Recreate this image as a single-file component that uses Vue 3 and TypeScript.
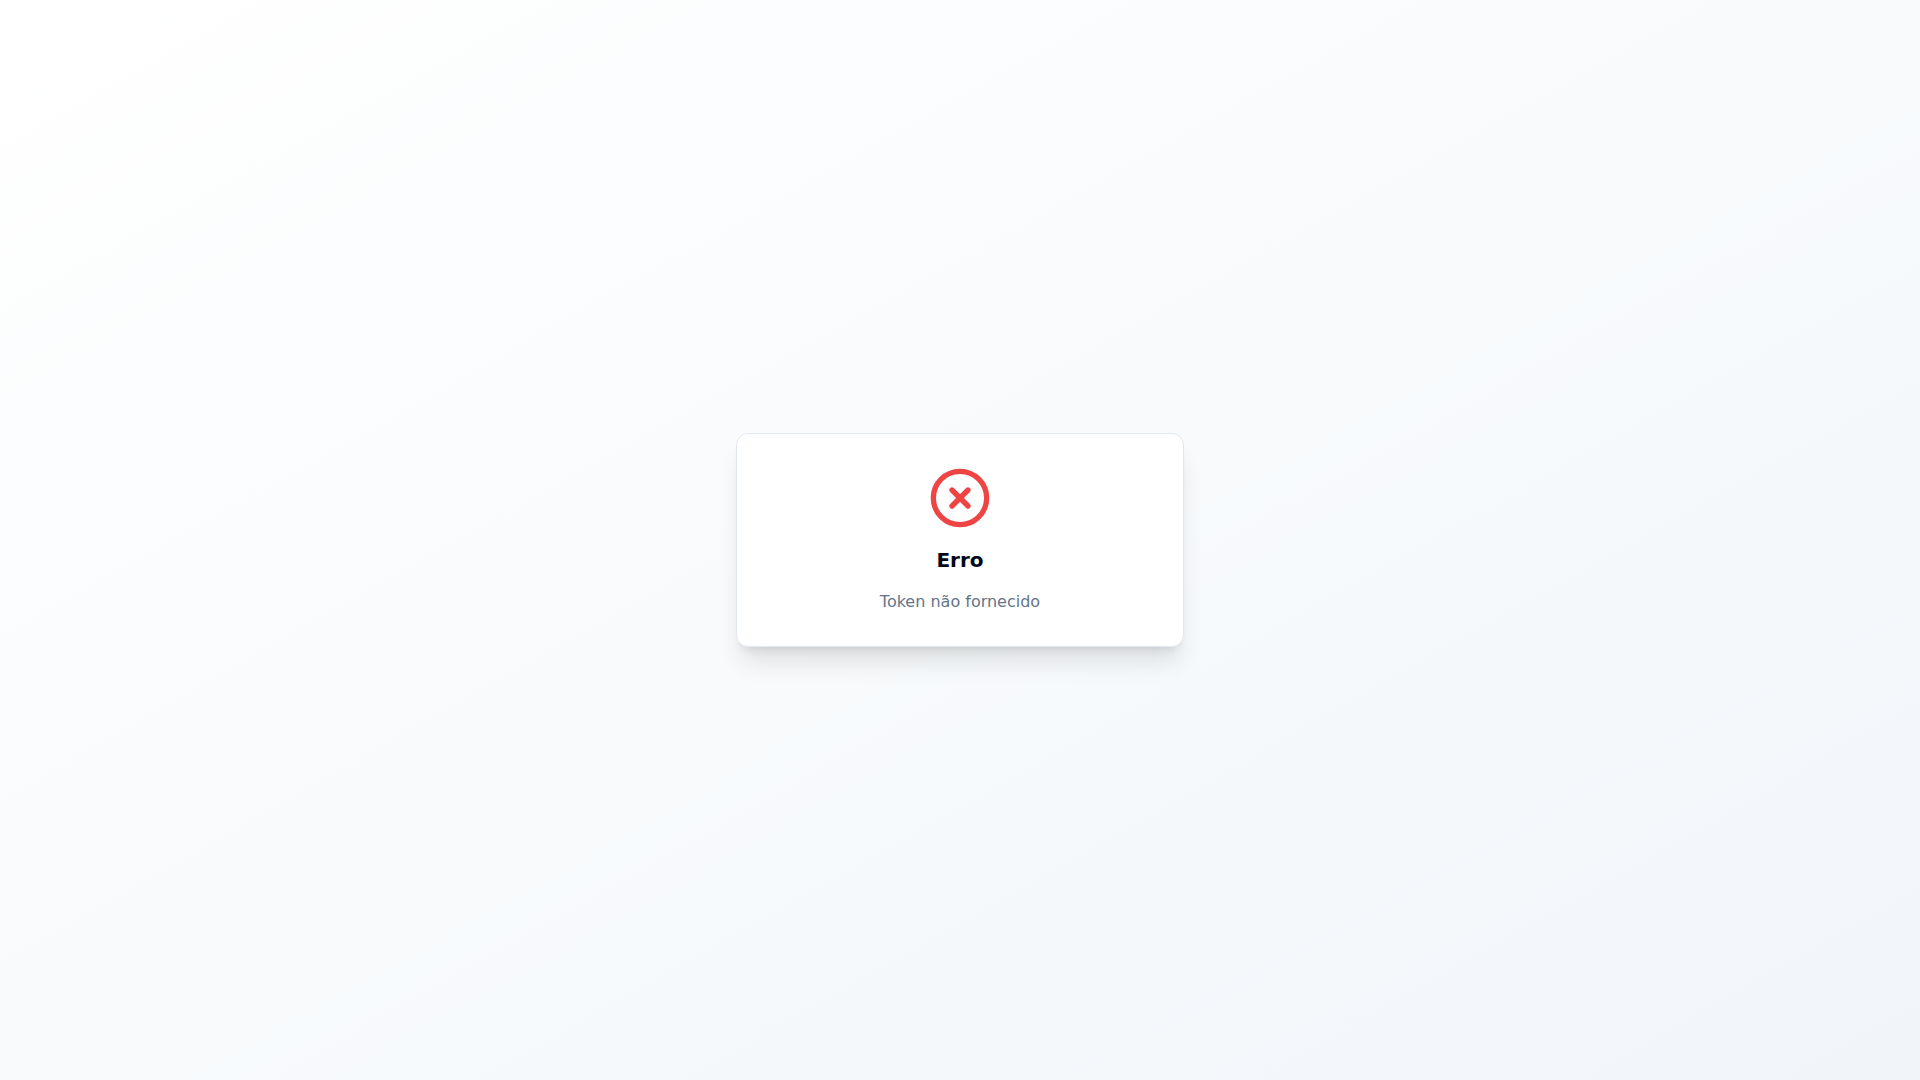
<script setup lang="ts">
const title: string = 'Erro'
const message: string = 'Token não fornecido'
</script>

<template>
  <main class="page">
    <section class="card" role="alert">
      <svg class="icon" viewBox="0 0 24 24" fill="none" stroke="currentColor" stroke-width="2" stroke-linecap="round" stroke-linejoin="round" aria-hidden="true">
        <circle cx="12" cy="12" r="10" />
        <path d="m15 9-6 6" />
        <path d="m9 9 6 6" />
      </svg>
      <h2 class="title">{{ title }}</h2>
      <p class="message">{{ message }}</p>
    </section>
  </main>
</template>

<style>
body {
  margin: 0;
}
</style>

<style scoped>
.page {
  box-sizing: border-box;
  min-height: 100vh;
  padding: 16px;
  display: flex;
  align-items: center;
  justify-content: center;
  background: linear-gradient(to bottom right, hsl(0 0% 100%), hsl(210 40% 96.1%));
  font-family: "DejaVu Sans", sans-serif;
}

.card {
  box-sizing: border-box;
  width: 100%;
  max-width: 448px;
  padding: 32px;
  display: flex;
  flex-direction: column;
  align-items: center;
  text-align: center;
  background: #ffffff;
  border: 1px solid #e2e8f0;
  border-radius: 12px;
  box-shadow: 0 20px 25px -5px rgb(0 0 0 / 0.1), 0 8px 10px -6px rgb(0 0 0 / 0.1);
}

.icon {
  width: 64px;
  height: 64px;
  margin-bottom: 16px;
  color: #ef4444;
}

.title {
  margin: 0 0 16px;
  font-size: 20px;
  line-height: 28px;
  font-weight: 700;
  color: #020817;
}

.message {
  margin: 0;
  font-size: 16px;
  line-height: 24px;
  color: #64748b;
}
</style>
